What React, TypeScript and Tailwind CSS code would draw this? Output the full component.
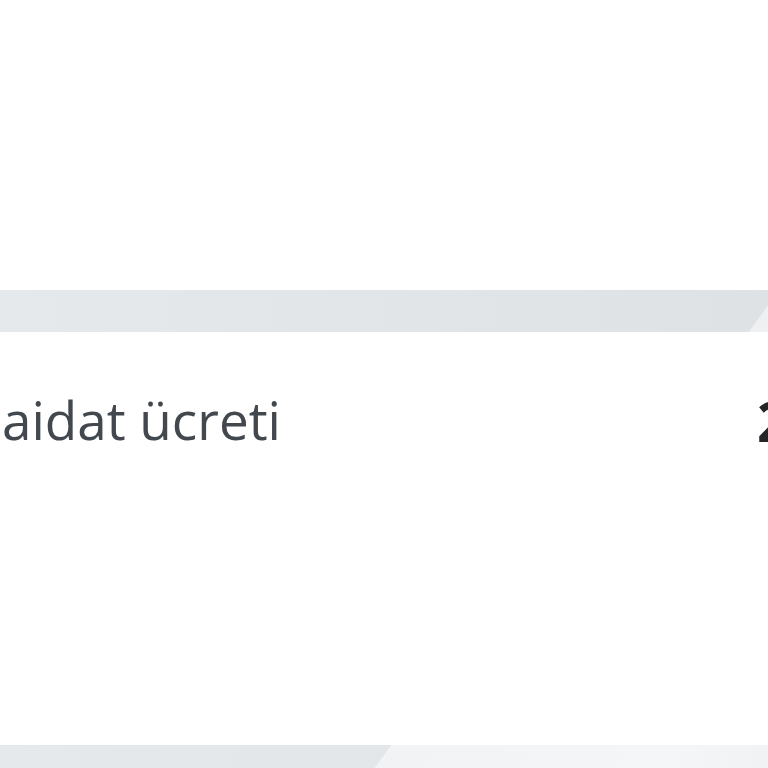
export default function App() {
  return (
    <div className="w-[768px] h-[768px] overflow-hidden bg-white flex flex-col font-['Open_Sans',sans-serif]">
      <div className="h-[290px] shrink-0" />

      <div className="relative h-[42px] shrink-0 overflow-hidden bg-[linear-gradient(90deg,#e6e9ec,#dfe2e5)]">
        <div className="absolute inset-y-0 left-[764px] w-[200px] -skew-x-[36deg] bg-[linear-gradient(90deg,#eef0f2,#f6f7f9)]" />
      </div>

      <div className="h-[413px] shrink-0 pt-[48px] grid grid-cols-[757px_auto] overflow-hidden whitespace-nowrap">
        <span className="pl-[2px] text-[53px] leading-[80px] font-[370] text-[#42484d]">aidat ücreti</span>
        <span className="text-[56px] leading-[80px] font-bold text-[#232527]">250 ₺</span>
      </div>

      <div className="relative h-[42px] shrink-0 overflow-hidden bg-[linear-gradient(90deg,#e6e9ec,#e1e4e7)]">
        <div className="absolute inset-y-0 left-[376px] w-[480px] -skew-x-[36deg] bg-[linear-gradient(90deg,#f1f3f5,#f5f6f8_60%,#eceef0)]" />
      </div>
    </div>
  );
}
